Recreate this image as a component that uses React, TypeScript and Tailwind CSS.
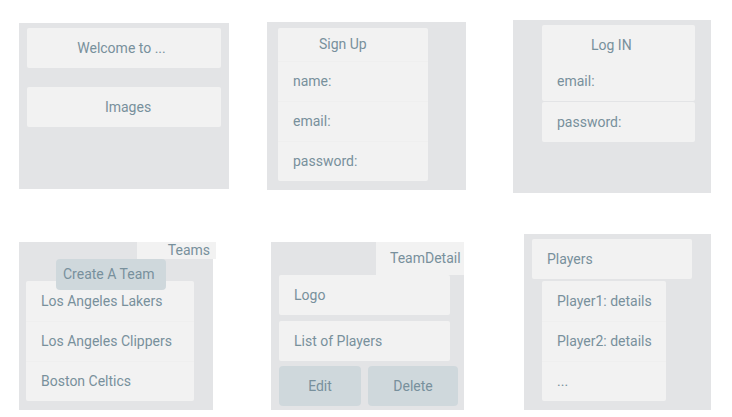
import React from "react";

const font = { fontFamily: "Roboto, 'Liberation Sans', sans-serif" };

function Row({ children, className = "" }: { children: React.ReactNode; className?: string }) {
  return (
    <div className={`h-[40px] flex items-center pl-[15px] ${className}`}>{children}</div>
  );
}

export default function App() {
  return (
    <div
      className="w-[732px] h-[417px] bg-white flex flex-col text-[14px] text-[#78909c] overflow-hidden"
      style={font}
    >
      {/* Row 1 */}
      <div className="h-[220px] flex items-start">
        {/* Welcome */}
        <div className="ml-[19px] mt-[23px] w-[210px] h-[166px] bg-[#e3e4e6] flex flex-col pt-[5px] px-[8px] gap-[19px]">
          <div className="h-[40px] bg-[#f2f2f2] rounded-[2px] flex items-center justify-center pr-[5px]">Welcome to ...</div>
          <div className="h-[40px] bg-[#f2f2f2] rounded-[2px] flex items-center justify-center pl-[8px]">Images</div>
        </div>

        {/* Sign Up */}
        <div className="ml-[38px] mt-[22px] w-[199px] h-[168px] bg-[#e3e4e6] pt-[6px] pl-[11px]">
          <div className="w-[150px] bg-[#f2f2f2] rounded-[2px] flex flex-col">
            <div className="h-[33px] flex items-center pl-[41px]">Sign Up</div>
            <Row className="border-t border-[#efefef]">name:</Row>
            <Row className="border-t border-[#efefef] pl-[14px]">email:</Row>
            <Row className="border-t border-[#efefef]">password:</Row>
          </div>
        </div>

        {/* Log IN */}
        <div className="ml-[47px] mt-[20px] w-[198px] h-[173px] bg-[#e3e4e6] pt-[5px] pl-[29px] flex flex-col gap-[1px]">
          <div className="w-[153px] h-[76px] bg-[#f2f2f2] rounded-[2px] flex flex-col">
            <div className="h-[40px] flex items-center pl-[49px]">Log IN</div>
            <div className="h-[32px] flex items-center pl-[15px]">email:</div>
          </div>
          <div className="w-[153px] h-[40px] bg-[#f2f2f2] rounded-[2px] flex items-center pl-[15px]">password:</div>
        </div>
      </div>

      {/* Row 2 */}
      <div className="flex items-start">
        {/* Teams */}
        <div className="ml-[19px] mt-[22px] w-[194px] h-[168px] bg-[#e3e4e6] flex flex-col">
          <div className="self-end -mr-[3px] w-[79px] h-[17px] bg-[#f2f2f2] flex items-center justify-end pr-[6px]">Teams</div>
          <div className="relative z-10 ml-[37px] w-[110px] h-[31px] bg-[#cfd8dc] rounded-[4px] flex items-center pl-[7px]">Create A Team</div>
          <div className="ml-[7px] -mt-[9px] w-[168px] bg-[#f2f2f2] rounded-[2px] flex flex-col">
            <Row>Los Angeles Lakers</Row>
            <Row className="border-t border-[#efefef]">Los Angeles Clippers</Row>
            <Row className="border-t border-[#efefef]">Boston Celtics</Row>
          </div>
        </div>

        {/* TeamDetail */}
        <div className="ml-[58px] mt-[22px] w-[193px] h-[168px] bg-[#e3e4e6] flex flex-col">
          <div className="self-end w-[88px] h-[33px] bg-[#f2f2f2] flex items-center pl-[14px]">TeamDetail</div>
          <div className="ml-[8px] w-[171px] h-[40px] bg-[#f2f2f2] rounded-[2px] flex items-center pl-[15px]">Logo</div>
          <div className="ml-[8px] mt-[6px] w-[171px] h-[40px] bg-[#f2f2f2] rounded-[2px] flex items-center pl-[15px]">List of Players</div>
          <div className="ml-[8px] mt-[5px] flex gap-[7px]">
            <div className="w-[82px] h-[40px] bg-[#cfd8dc] rounded-[4px] flex items-center justify-center">Edit</div>
            <div className="w-[90px] h-[40px] bg-[#cfd8dc] rounded-[4px] flex items-center justify-center">Delete</div>
          </div>
        </div>

        {/* Players */}
        <div className="ml-[60px] mt-[14px] w-[187px] h-[176px] bg-[#e3e4e6] flex flex-col">
          <div className="ml-[8px] mt-[5px] w-[160px] h-[40px] bg-[#f2f2f2] rounded-[2px] flex items-center pl-[15px]">Players</div>
          <div className="ml-[18px] mt-[2px] w-[124px] bg-[#f2f2f2] rounded-[2px] flex flex-col">
            <Row>Player1: details</Row>
            <Row className="border-t border-[#efefef]">Player2: details</Row>
            <Row className="border-t border-[#efefef]">...</Row>
          </div>
        </div>
      </div>
    </div>
  );
}
